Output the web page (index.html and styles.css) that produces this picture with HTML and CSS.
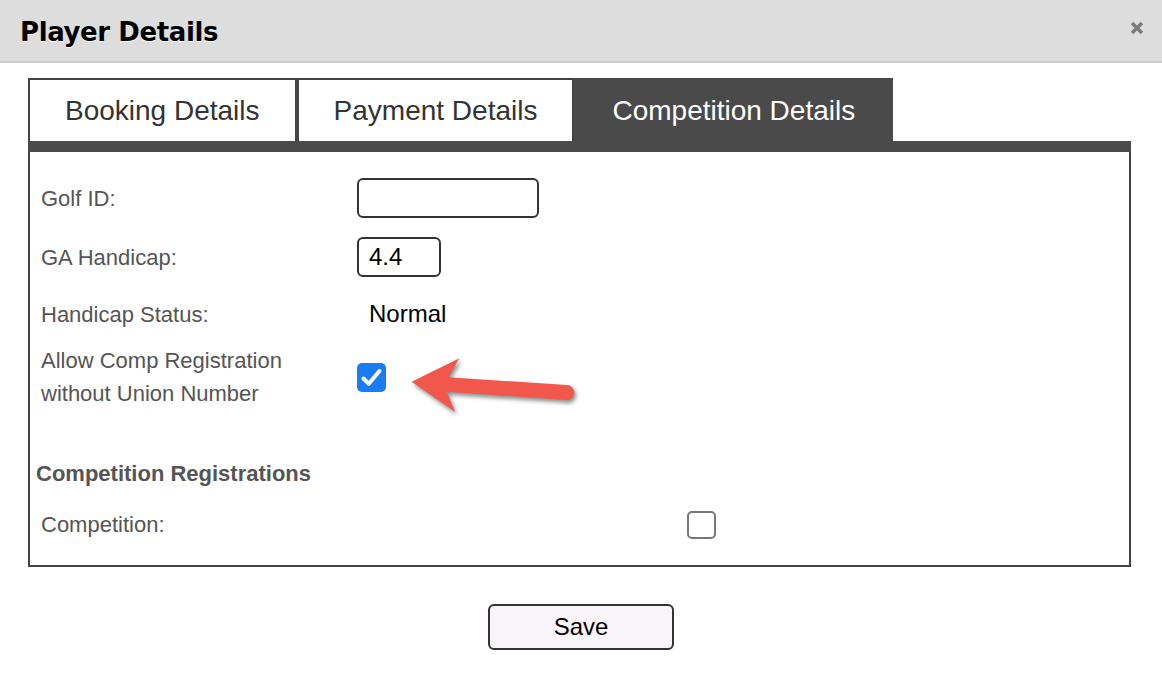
FILE: index.html
```html
<!DOCTYPE html>
<html>
<head>
<meta charset="utf-8">
<title>Player Details</title>
<link rel="stylesheet" href="styles.css">
</head>
<body>
<div class="modal">
  <div class="header">
    <div class="title">Player Details</div>
    <svg class="close" width="14" height="14" viewBox="0 0 14 14"><path d="M2 2 L12 12 M12 2 L2 12" stroke="#7a7a7a" stroke-width="3.4"/></svg>
  </div>
  <div class="content">
    <div class="tabs">
      <div class="tab">Booking Details</div>
      <div class="tab">Payment Details</div>
      <div class="tab active">Competition Details</div>
    </div>
    <div class="bar"></div>
    <div class="panel">
      <div class="row r1">
        <div class="label">Golf ID:</div>
        <input class="field wide" type="text" value="">
      </div>
      <div class="row r2">
        <div class="label">GA Handicap:</div>
        <input class="field narrow" type="text" value="4.4">
      </div>
      <div class="row r3">
        <div class="label">Handicap Status:</div>
        <div class="value">Normal</div>
      </div>
      <div class="row r4">
        <div class="label">Allow Comp Registration<br>without Union Number</div>
        <span class="check on"><svg width="29" height="29" viewBox="0 0 29 29"><path d="M6.5 15.5 L11.8 20.8 L22.5 8" fill="none" stroke="#fff" stroke-width="4" stroke-linecap="round" stroke-linejoin="round"/></svg></span>
      </div>
      <div class="section">Competition Registrations</div>
      <div class="row comp">
        <div class="label clabel">Competition:</div>
        <span class="check off"></span>
      </div>
    </div>
    <div class="actions">
      <button class="btn" type="button">Save</button>
    </div>
  </div>
  <svg class="arrow" width="185" height="80" viewBox="0 0 185 80">
    <path d="M11.7 36.7 L59.3 13.3 L48.3 32.3 L166.7 40 A7.5 7.5 0 0 1 166.7 55 L46.7 46.7 L55 66.7 Z" fill="#f1574a"/>
  </svg>
</div>
</body>
</html>
```
FILE: styles.css
```css
* { box-sizing: border-box; }
body {
  margin: 0;
  font-family: "Liberation Sans", Arial, sans-serif;
  background: #fff;
}
.modal {
  position: relative;
  width: 1162px;
  height: 692px;
  overflow: hidden;
}
.header {
  height: 63px;
  background: #dddddd;
  border-bottom: 2px solid #cccccc;
  display: flex;
  align-items: center;
  justify-content: space-between;
  padding: 3px 18px 0 20px;
}
.title {
  font-family: "DejaVu Sans", sans-serif;
  font-weight: bold;
  font-size: 26px;
  letter-spacing: -0.4px;
  color: #000;
  text-shadow: 0 1px 0 #fff;
}
.close { display: block; margin-top: -9px; }
.content {
  padding: 15px 31px 0 28px;
}
.tabs { display: flex; }
.tab {
  height: 63px;
  border: 2px solid #444;
  border-bottom: none;
  padding: 0 35px;
  display: flex;
  align-items: center;
  font-size: 28px;
  color: #333;
  background: #fff;
}
.tab.active {
  background: #4a4a4a;
  border-color: #4a4a4a;
  color: #fff;
  padding: 0 36px;
}
.bar { height: 11px; background: #4a4a4a; }
.panel {
  height: 415px;
  border: 2px solid #444;
  border-top: none;
  padding-top: 26px;
}
.row {
  display: flex;
  align-items: center;
  padding-left: 11px;
}
.label {
  width: 316px;
  font-size: 22px;
  line-height: 33px;
  color: #555;
}
.r1 { height: 40px; margin-bottom: 19px; }
.r2 { height: 40px; margin-bottom: 18px; }
.r3 { height: 38px; margin-bottom: 11px; }
.r4 { height: 66px; }
.field {
  height: 40px;
  border: 2px solid #333;
  border-radius: 6px;
  background: #fff;
  font-family: "Liberation Sans", Arial, sans-serif;
  font-size: 24px;
  color: #000;
  padding: 0 10px;
  outline: none;
}
.wide { width: 182px; }
.narrow { width: 84px; }
.value {
  font-size: 24px;
  color: #000;
  padding-left: 12px;
}
.check {
  display: block;
  width: 29px;
  height: 29px;
  border-radius: 5px;
}
.check svg { display: block; }
.check.on { background: #1a7cf2; }
.check.off {
  height: 28px;
  border: 2px solid #777;
  background: #fff;
}
.section {
  margin-top: 51px;
  padding-left: 6px;
  font-size: 22px;
  line-height: 26px;
  font-weight: bold;
  color: #555;
}
.comp { margin-top: 23px; height: 29px; }
.clabel { width: 646px; }
.actions {
  display: flex;
  justify-content: center;
  margin-top: 37px;
}
.btn {
  width: 186px;
  height: 46px;
  border: 2px solid #333;
  border-radius: 6px;
  background: #f8f4fa;
  font-family: "Liberation Sans", Arial, sans-serif;
  font-size: 24px;
  color: #000;
  margin-left: 3px;
}
.arrow {
  position: absolute;
  left: 400px;
  top: 345px;
  filter: drop-shadow(2px 3px 2px rgba(0,0,0,0.45));
}
```
